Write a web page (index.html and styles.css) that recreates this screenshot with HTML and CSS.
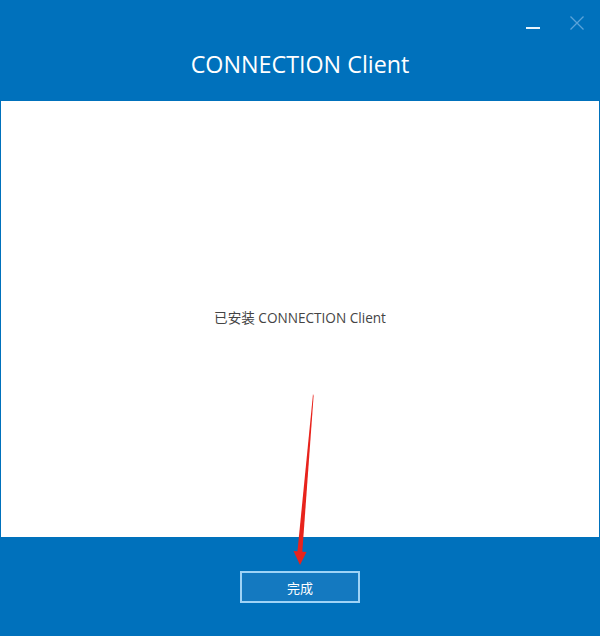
FILE: index.html
```html
<!DOCTYPE html>
<html lang="zh-CN">
<head>
<meta charset="utf-8">
<title>CONNECTION Client</title>
<link rel="stylesheet" href="styles.css">
</head>
<body>
<div class="window">
  <header class="header">
    <div class="controls">
      <span class="btn-min"></span>
      <svg class="btn-close" width="14" height="14" viewBox="0 0 14 14"><path d="M0.5 0.5 L13.5 13.5 M13.5 0.5 L0.5 13.5" stroke="#5aa3da" stroke-width="1.3" fill="none"/></svg>
    </div>
    <h1 class="title">CONNECTION Client</h1>
  </header>
  <main class="content">
    <p class="message">已安装 CONNECTION Client</p>
  </main>
  <footer class="footer">
    <button class="finish">完成</button>
  </footer>
  <svg class="arrow" width="600" height="636" viewBox="0 0 600 636">
    <path d="M313 394 L313.6 396 L302 556 L297 556 Z" fill="#e8231c"/>
    <path d="M293.5 551 L306.5 552 L300 565 Z" fill="#e8231c"/>
  </svg>
</div>
</body>
</html>
```
FILE: styles.css
```css
html, body {
  margin: 0;
  padding: 0;
}
body {
  width: 600px;
  height: 636px;
  font-family: "Open Sans", "Noto Sans CJK SC", sans-serif;
  background: #0071bc;
}
.window {
  position: relative;
  width: 600px;
  height: 636px;
  display: flex;
  flex-direction: column;
  background: #0071bc;
}
.header {
  height: 101px;
  position: relative;
  display: flex;
  align-items: center;
  justify-content: center;
}
.title {
  margin: 0;
  padding-top: 27px;
  font-weight: 400;
  font-size: 23.3px;
  line-height: 28px;
  color: #ffffff;
  letter-spacing: 0;
}
.controls {
  position: absolute;
  top: 16px;
  right: 16px;
  display: flex;
  align-items: flex-start;
  gap: 30px;
}
.btn-min {
  display: block;
  width: 14px;
  height: 2px;
  margin-top: 11px;
  background: #e8f4fc;
}
.btn-close {
  display: block;
}
.content {
  height: 436px;
  margin: 0 1px;
  background: #ffffff;
  display: flex;
  align-items: center;
  justify-content: center;
}
.message {
  margin: 0;
  margin-top: -4px;
  font-size: 13.6px;
  color: #444444;
}
.footer {
  flex: 1;
  display: flex;
  justify-content: center;
  padding-top: 34px;
  box-sizing: border-box;
}
.finish {
  width: 120px;
  height: 32px;
  box-sizing: border-box;
  border: 2px solid #9fd3f6;
  background: #1479c0;
  color: #ffffff;
  font-family: "Noto Sans CJK SC", sans-serif;
  font-size: 13px;
  padding: 0;
}
.arrow {
  position: absolute;
  left: 0;
  top: 0;
  pointer-events: none;
}
```
